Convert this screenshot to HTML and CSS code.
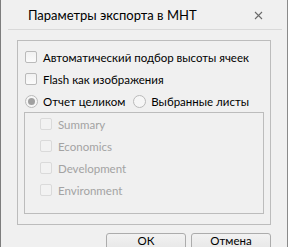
FILE: index.html
```html
<!DOCTYPE html>
<html lang="ru">
<head>
    <meta charset="UTF-8">
    <title>Параметры экспорта в МНТ</title>
    <link rel="stylesheet" href="styles.css">
</head>
<body>
    <div class="window">
        <div class="title-bar">
            <span class="title">Параметры экспорта в МНТ</span>
            <svg class="close" width="9" height="9" viewBox="0 0 9 9">
                <path d="M1 1 L8 8 M8 1 L1 8" stroke="#6a6a6a" stroke-width="1.1" fill="none"/>
            </svg>
        </div>
        <div class="separator"></div>

        <div class="group">
            <label class="row">
                <span class="check"></span>
                <span class="text">Автоматический подбор высоты ячеек</span>
            </label>
            <label class="row">
                <span class="check"></span>
                <span class="text">Flash как изображения</span>
            </label>
            <div class="row">
                <span class="radio checked"></span>
                <span class="text">Отчет целиком</span>
                <span class="radio second"></span>
                <span class="text">Выбранные листы</span>
            </div>

            <div class="sheets">
                <div class="row disabled"><span class="check"></span><span class="text">Summary</span></div>
                <div class="row disabled"><span class="check"></span><span class="text">Economics</span></div>
                <div class="row disabled"><span class="check"></span><span class="text">Development</span></div>
                <div class="row disabled"><span class="check"></span><span class="text">Environment</span></div>
            </div>
        </div>

        <div class="buttons">
            <button class="btn">ОК</button>
            <button class="btn">Отмена</button>
        </div>
    </div>
</body>
</html>
```

FILE: styles.css
```css
html, body {
    margin: 0;
    padding: 0;
    background: #f0f0f0;
}
body {
    font-family: Lato, 'Open Sans', sans-serif;
    font-size: 11.5px;
    color: #000;
}
.window {
    width: 288px;
    height: 247px;
    box-sizing: border-box;
    border-left: 1px solid #7d7d7d;
    border-right: 1px solid #8a8a8a;
    background: #f0f0f0;
    overflow: hidden;
}
.title-bar {
    height: 29px;
    display: flex;
    align-items: center;
    padding-left: 27px;
    padding-right: 24px;
}
.title {
    font-size: 13px;
    flex: 1;
    padding-top: 1px;
    white-space: nowrap;
}
.close {
    margin-top: 2px;
}
.separator {
    margin: 0 5px 0 7px;
    border-top: 1px solid #d9d9d9;
}
.group {
    margin: 10px 0 0 16px;
    width: 254px;
    box-sizing: border-box;
    border: 1px solid #bcbcbc;
    padding: 5px 6px 10px 6px;
}
.row {
    height: 22px;
    display: flex;
    align-items: center;
    padding-left: 1px;
    white-space: nowrap;
}
.check {
    flex: none;
    width: 12px;
    height: 12px;
    box-sizing: border-box;
    border: 1px solid #bababa;
    border-radius: 2px;
    background: linear-gradient(#f1f1f1, #fbfbfb);
    margin-right: 6px;
}
.radio {
    flex: none;
    width: 13px;
    height: 13px;
    box-sizing: border-box;
    border: 1px solid #bababa;
    border-radius: 50%;
    background: #f6f6f6;
    margin-right: 5px;
    display: flex;
    align-items: center;
    justify-content: center;
}
.radio.checked::after {
    content: "";
    width: 7px;
    height: 7px;
    border-radius: 50%;
    background: #a0a0a0;
}
.radio.second {
    margin-left: 8px;
}
.sheets {
    border: 1px solid #bcbcbc;
    padding: 0 0 12px 14px;
}
.row.disabled {
    color: #a3a3a3;
}
.row.disabled .check {
    border-color: #dadada;
    background: #f2f2f2;
}
.buttons {
    display: flex;
    justify-content: flex-end;
    gap: 5px;
    padding-right: 16px;
    margin-top: 8px;
}
.btn {
    width: 80px;
    height: 23px;
    font-family: inherit;
    font-size: 11.5px;
    color: #000;
    border: 1px solid #acacac;
    border-radius: 3px;
    background: linear-gradient(#f2f2f2, #e3e3e3);
    padding: 0 0 9px 0;
}
```
